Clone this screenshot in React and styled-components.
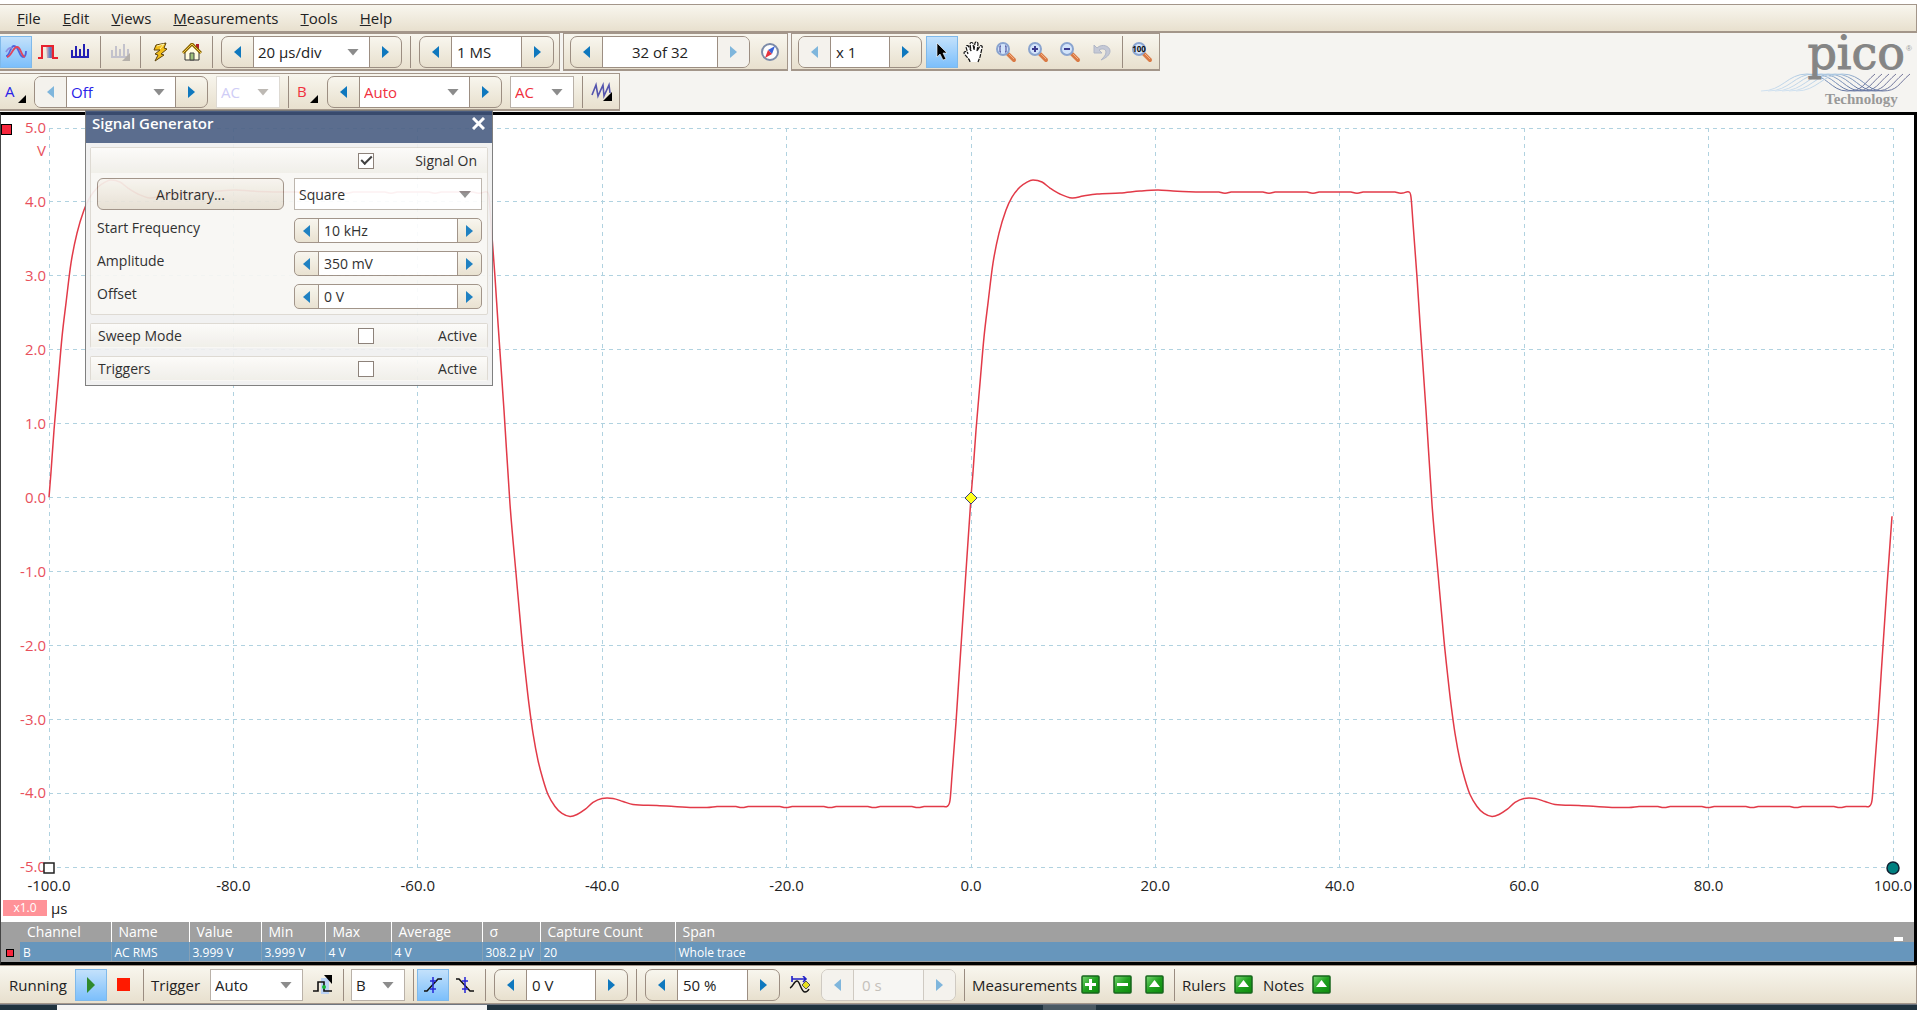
import React from "react";
import styled, { createGlobalStyle, css } from "styled-components";

const GlobalStyle = createGlobalStyle`
  * {
    box-sizing: border-box;
  }
  body {
    margin: 0;
    background: #fff;
    color: #222;
    font-family: "Open Sans", "Noto Sans", sans-serif;
    font-size: 15px;
  }
  button, input, select {
    font: inherit;
    color: inherit;
    margin: 0;
  }
`;

const barFill = "linear-gradient(#f8f6ee, #e8e0ce)";
const line = "#a3968a";

const Window = styled.div`
  min-height: 100vh;
  padding-top: 4px;
  display: flex;
  flex-direction: column;
  overflow: hidden;
`;

const MenuBar = styled.nav`
  height: 29px;
  display: flex;
  align-items: center;
  gap: 22px;
  padding-left: 17px;
  background: ${barFill};
  border: 1px solid ${line};
  border-left: 0;
  border-bottom-width: 2px;
`;

const MenuItem = styled.button`
  border: 0;
  padding: 0;
  background: none;
  line-height: 20px;
`;

const Header = styled.header`
  display: flex;
  justify-content: space-between;
  background: #f5f4f1;
  padding-bottom: 1px;
`;

const Toolbars = styled.div`
  display: flex;
  flex-direction: column;
  gap: 2px;
`;

const ToolRow = styled.div`
  display: flex;
  gap: 3px;
`;

const Group = styled.div`
  display: flex;
  align-items: center;
  height: 38px;
  padding: 0 1px;
  background: ${barFill};
  border: 1px solid ${line};
  border-bottom-width: 2px;
  ${({ $first }) =>
    $first &&
    css`
      border-left: 0;
      padding-left: 0;
    `}
`;

const Tool = styled.button`
  width: ${({ $w }) => $w || 32}px;
  height: 32px;
  flex: none;
  display: flex;
  align-items: center;
  justify-content: center;
  padding: 0;
  border: 1px solid transparent;
  background: none;
  color: ${({ $color }) => $color || "inherit"};
  ${({ $active }) =>
    $active &&
    css`
      border-color: #7fb9ea;
      background: linear-gradient(#c3e1fb, #7cbffb);
    `}
`;

const Sep = styled.span`
  width: 8px;
  height: 32px;
  flex: none;
  background: linear-gradient(#9a8c80, #9a8c80) center / 1px 100% no-repeat;
`;

const SpinBox = styled.div`
  display: flex;
  flex: none;
  width: ${({ $w }) => ($w ? `${$w}px` : "auto")};
  height: ${({ $small }) => ($small ? 25 : 32)}px;
  margin: ${({ $small }) => ($small ? "0" : "0 4px 0 5px")};
  border: 1px solid #9c8e82;
  border-radius: ${({ $small }) => ($small ? 5 : 7)}px;
  background: ${barFill};
  overflow: hidden;
  ${({ $off }) =>
    $off &&
    css`
      border-color: #cfcac2;
      background: #f4f2ed;
    `}
`;

const SpinButton = styled.button`
  width: ${({ $small }) => ($small ? 23 : 31)}px;
  flex: none;
  display: flex;
  align-items: center;
  justify-content: center;
  padding: 0;
  border: 0;
  background: ${({ disabled }) => (disabled ? "#f4f2ed" : "none")};
  color: ${({ disabled }) => (disabled ? "#7fb6dc" : "#0f78be")};
`;

const SpinInput = styled.input`
  flex: 1;
  min-width: 0;
  border: 1px solid #9c8e82;
  border-width: 0 1px;
  border-radius: 0;
  padding: 0 5px;
  outline: 0;
  background: #fff;
  text-align: ${({ $align }) => $align || "left"};
  &:disabled {
    border-color: #cfcac2;
    background: #f7f6f3;
    color: #c4c0ba;
    padding-left: 8px;
  }
`;

const SelectWrap = styled.div`
  position: relative;
  display: flex;
  ${({ $inside, $w, $off, $fluid }) =>
    $inside
      ? css`
          flex: 1;
          border: 1px solid #9c8e82;
          border-width: 0 1px;
        `
      : css`
          flex: none;
          width: ${$fluid ? "auto" : `${$w}px`};
          height: 32px;
          margin: ${$fluid ? "0" : "0 4px"};
          border: 1px solid ${$off ? "#dedad3" : "#b9b1a8"};
        `}
`;

const NativeSelect = styled.select`
  appearance: none;
  width: 100%;
  border: 0;
  border-radius: 0;
  outline: 0;
  padding: 0 24px 0 4px;
  background: #fff;
  color: ${({ $color }) => $color || "inherit"};
  opacity: 1;
`;

const DropArrow = styled.span`
  position: absolute;
  right: 10px;
  top: 50%;
  margin-top: -3px;
  width: 12px;
  height: 7px;
  clip-path: polygon(0 0, 100% 0, 50% 100%);
  background: ${({ $off }) => ($off ? "#bdb9b4" : "#8c8c8c")};
  pointer-events: none;
`;

const Scope = styled.main`
  position: relative;
  flex: 1;
  display: flex;
  flex-direction: column;
  border: 3px solid #000;
  border-left: 1px solid #444;
`;

const Graph = styled.section`
  flex: 1;
  min-height: 400px;
  display: grid;
  grid-template-columns: 48px 1fr 21px;
  grid-template-rows: 1fr 28px 26px;
  padding-top: 13px;
  background: #fff;
`;

const YAxis = styled.div`
  position: relative;
  display: flex;
  flex-direction: column;
  justify-content: space-between;
  align-items: flex-end;
  padding-right: 3px;
  margin: -11px 0 -9px;
  line-height: 20px;
  color: #e8505c;
`;

const YUnit = styled.span`
  position: absolute;
  right: 3px;
  top: 23px;
`;

const ChannelMark = styled.span`
  position: absolute;
  left: 0;
  top: 7px;
  width: 11px;
  height: 11px;
  background: #f7263c;
  border: 1px solid #000;
`;

const Plot = styled.div`
  position: relative;
`;

const PlotSvg = styled.svg`
  position: absolute;
  inset: 0;
  width: 100%;
  height: 100%;
  overflow: visible;
`;

const Marker = styled.span`
  position: absolute;
  left: ${({ $x }) => $x}%;
  top: ${({ $y }) => $y}%;
  transform: translate(-50%, -50%);
  display: flex;
`;

const XAxis = styled.div`
  grid-column: 2;
  display: flex;
  justify-content: space-between;
  padding-top: 7px;
  line-height: 20px;
`;

const XLabel = styled.span`
  width: 0;
  display: flex;
  justify-content: center;
  white-space: nowrap;
`;

const ScaleRow = styled.div`
  grid-column: 1 / -1;
  display: flex;
  align-items: center;
  gap: 4px;
  padding: 0 0 2px 2px;
`;

const ScaleBadge = styled.button`
  width: 44px;
  height: 16px;
  padding: 0;
  border: 0;
  background: #ff9298;
  color: #fff;
  font-size: 12px;
  line-height: 16px;
`;

const Table = styled.table`
  width: 100%;
  table-layout: fixed;
  border-collapse: collapse;
  color: #fff;
  text-align: left;
  white-space: nowrap;
  background: #a0a0a0;

  th, td {
    height: 20px;
    padding: 0;
    overflow: hidden;
  }
  th {
    font-size: 14px;
    font-weight: 400;
    line-height: 20px;
    padding-left: 7px;
    border-left: 1px solid #fff;
  }
  th:nth-child(-n + 2) {
    border-left: 0;
  }
  td {
    background: #6796bc;
    font-size: 12px;
    line-height: 16px;
    padding: 3px 0 0 3px;
    border-left: 1px solid #86a0b5;
    border-bottom: 1px solid #a0a0a0;
  }
  td:first-child {
    background: #a0a0a0;
    padding-left: 5px;
    border-left: 0;
  }
  td:nth-child(2) {
    border-left: 0;
  }
`;

const Col = styled.col`
  width: ${({ $w }) => ($w ? `${$w}px` : "auto")};
`;

const RowMark = styled.span`
  display: block;
  width: 8px;
  height: 8px;
  background: #f7263c;
  border: 1px solid #000;
`;

const LastHead = styled.div`
  display: flex;
  justify-content: space-between;
  align-items: flex-end;
  height: 20px;
`;

const Collapse = styled.button`
  width: 9px;
  height: 4px;
  padding: 0;
  border: 0;
  background: #fff;
  margin: 0 11px 1px 0;
`;

const Dialog = styled.section`
  position: absolute;
  left: 84px;
  top: -5px;
  width: 408px;
  background: #f0f0f0;
  border: 1px solid #777;
  opacity: 0.93;
  display: flex;
  flex-direction: column;
  gap: 8px;
  padding-bottom: 4px;
  font-size: 14px;
`;

const TitleBar = styled.header`
  height: 32px;
  display: flex;
  justify-content: space-between;
  align-items: flex-start;
  padding: 0 7px 0 6px;
  background: linear-gradient(#3d5076 4px, #4f6386 4px);
  color: #fff;
  margin-bottom: -4px;
`;

const Title = styled.h2`
  margin: 2px 0 0;
  font-size: 15px;
  line-height: 20px;
  font-weight: 600;
`;

const CloseButton = styled.button`
  display: flex;
  padding: 6px 0 0;
  border: 0;
  background: none;
`;

const Panel = styled.div`
  margin: 0 4px;
  border: 1px solid #dcd8d0;
  border-bottom-color: ${({ $open }) => ($open ? "#dcd8d0" : "transparent")};
  border-radius: 2px;
  background: #f8f7f4;
`;

const PanelHead = styled.div`
  display: flex;
  align-items: center;
  height: ${({ $tall }) => ($tall ? 25 : 23)}px;
  padding: 0 10px 0 7px;
  background: linear-gradient(#fcfbf9, #f0eee8);
`;

const PanelName = styled.span`
  width: 260px;
`;

const CheckLabel = styled.label`
  flex: 1;
  display: flex;
  justify-content: space-between;
  align-items: center;
`;

const CheckBox = styled.input`
  appearance: none;
  width: 16px;
  height: 16px;
  border: 1px solid #857970;
  background: #fff;
  display: flex;
  align-items: center;
  justify-content: center;
  &:checked::before {
    content: "";
    width: 9px;
    height: 4px;
    margin-bottom: 3px;
    border: solid #333;
    border-width: 0 0 2px 2px;
    rotate: -45deg;
  }
`;

const Form = styled.div`
  display: grid;
  grid-template-columns: 187px 188px;
  column-gap: 10px;
  row-gap: 8px;
  padding: 5px 5px 5px 6px;
`;

const WideButton = styled.button`
  height: 32px;
  border: 1px solid #9c8e82;
  border-radius: 6px;
  background: linear-gradient(#f7f4ee, #e6dfd2);
`;

const FieldLabel = styled.label`
  line-height: 20px;
`;

const StatusBar = styled.footer`
  display: flex;
  align-items: center;
  height: 39px;
  background: ${barFill};
  border: solid ${line};
  border-width: 1px 1px 1px 0;
`;

const BarLabel = styled.span`
  width: ${({ $w }) => $w}px;
  padding-left: ${({ $pad }) => $pad || 4}px;
  flex: none;
  white-space: nowrap;
`;

const TaskStrip = styled.div`
  display: flex;
  height: 6px;
  background: #20333f;
  border-top: 1px solid #6f7680;
  padding-left: 57px;
  gap: 556px;
`;

const TaskPart = styled.span`
  width: ${({ $w }) => $w}px;
  background: ${({ $color }) => $color};
`;

const LogoSvg = styled.svg`
  flex: none;
  overflow: visible;
`;

/* ---------- small building blocks ---------- */

const Tri = ({ dir }) => (
  <svg width="7" height="12" viewBox="0 0 7 12">
    <path d={dir === "left" ? "M7 0v12L0 6z" : "M0 0v12l7-6z"} fill="currentColor" />
  </svg>
);

const Select = ({ label, options, color, off, ...rest }) => (
  <SelectWrap $off={off} {...rest}>
    <NativeSelect aria-label={label} disabled={off} $color={color}>
      {options.map((o) => (
        <option key={o}>{o}</option>
      ))}
    </NativeSelect>
    <DropArrow $off={off} />
  </SelectWrap>
);

const Spinner = ({ id, label, value, options, color, w, align, small, noPrev, noNext, off }) => (
  <SpinBox $w={w} $small={small} $off={off}>
    <SpinButton aria-label={`${label} down`} disabled={noPrev || off} $small={small}>
      <Tri dir="left" />
    </SpinButton>
    {options ? (
      <Select $inside label={label} options={options} color={color} />
    ) : (
      <SpinInput id={id} aria-label={label} defaultValue={value} disabled={off} $align={align} />
    )}
    <SpinButton aria-label={`${label} up`} disabled={noNext || off} $small={small}>
      <Tri dir="right" />
    </SpinButton>
  </SpinBox>
);

/* ---------- icons ---------- */

const ScopeIcon = () => (
  <svg width="22" height="16" viewBox="0 0 22 16" fill="none" strokeWidth="1.8">
    <path d="M1 12C5 12 5 2 9 2c5 0 5 11 9 11 2 0 3-3 3-6" stroke="#4f66dc" />
    <path d="M2 13C6 13 8 3 12 3s4 9 8 10" stroke="#e0455c" />
    <path d="M1 8c1-2 3-5 6-4" stroke="#8d8fe0" />
  </svg>
);

const PersistIcon = () => (
  <svg width="20" height="16" viewBox="0 0 20 16">
    <defs>
      <linearGradient id="persist">
        <stop offset="0" stopColor="#f4b9b4" />
        <stop offset=".6" stopColor="#4c7fc8" />
        <stop offset="1" stopColor="#d94b56" />
      </linearGradient>
    </defs>
    <path d="M8 2h7v12H9z" fill="url(#persist)" />
    <path d="M0 14h4V2h11v12h5" fill="none" stroke="#e8222e" strokeWidth="2" />
  </svg>
);

const Bars = ({ color, corner }) => (
  <svg width="20" height="18" viewBox="0 0 20 18">
    <path d="M1 14h18M2 14V7M6 14V3M10 14V6M14 14V1M18 14V6" stroke={color} strokeWidth="2" fill="none" />
    {corner && <path d="M20 10v8h-8z" fill="#b5b0aa" />}
  </svg>
);

const BoltIcon = () => (
  <svg width="18" height="20" viewBox="0 0 18 20">
    <path d="M5 3l10-2-2 5 3 1-6 5 3 1-9 6 3-6-3-1 5-4-6 0z" fill="#f2bd1a" stroke="#5c430e" strokeLinejoin="round" />
    <path d="M6 4l7-2-4 5" fill="none" stroke="#fff3a8" />
  </svg>
);

const HomeIcon = () => (
  <svg width="20" height="18" viewBox="0 0 20 18">
    <path d="M14 1h3v7h-3z" fill="#b3202a" />
    <path d="M3 9v8h14V9l-7-7z" fill="#fffbe0" stroke="#333" />
    <path d="M1 10L10 1l9 9" fill="none" stroke="#8a6400" strokeWidth="3" />
    <path d="M1 10L10 1l9 9" fill="none" stroke="#edc84a" />
    <path d="M8 10h4v7H8z" fill="#9fc07c" stroke="#444" />
  </svg>
);

const CompassIcon = () => (
  <svg width="20" height="20" viewBox="0 0 20 20">
    <circle cx="10" cy="10" r="8" fill="#fdfdfd" stroke="#7c8ba8" strokeWidth="2" />
    <path d="M15 4l-3 8-4-4z" fill="#3b62d6" />
    <path d="M5 16l3-8 4 4z" fill="#e8323c" />
  </svg>
);

const CursorIcon = () => (
  <svg width="14" height="21" viewBox="0 0 14 21">
    <path d="M2 2v14l3-3 3 6 3-1-3-6h4z" fill="#000" stroke="#fff" strokeOpacity=".6" />
  </svg>
);

const HandIcon = () => (
  <svg width="22" height="22" viewBox="0 0 22 22">
    <path
      d="M7 21c0-3-4-5-6-9 0-2 3-2 4 1L3 6c0-2 2-2 3 0l2 4L7 3c0-2 3-2 3 0l1 6 1-7c1-2 3-1 3 1l-1 7 3-5c1-1 3 0 2 2l-2 9-2 5"
      fill="#fff"
      stroke="#111"
      strokeWidth="1.2"
      strokeDasharray="4 1"
    />
  </svg>
);

const Magnifier = ({ children }) => (
  <svg width="22" height="22" viewBox="0 0 22 22">
    <path d="M13 13l6 6" stroke="#d97a45" strokeWidth="4" strokeLinecap="round" />
    <path d="M14 13l5 5" stroke="#f4b184" strokeWidth="1" />
    <circle cx="8" cy="8" r="6" fill="#d3e4fa" stroke="#8aa4cf" strokeWidth="2" />
    {children}
  </svg>
);

const UndoIcon = () => (
  <svg width="20" height="20" viewBox="0 0 20 20">
    <path d="M2 3v8h8L7 8c3-2 7-1 7 2 0 3-2 5-5 8 5-2 9-5 9-9 0-5-8-8-13-3z" fill="#c5c9d6" stroke="#b0b6c6" />
  </svg>
);

const WavesIcon = () => (
  <svg width="22" height="20" viewBox="0 0 22 20">
    <path d="M1 13L5 3l2 11 5-11 1 11 5-11 1 8" fill="none" stroke="#5454ae" strokeWidth="1.6" />
    <path d="M21 10v9h-9z" fill="#000" />
  </svg>
);

const ChannelIcon = ({ name }) => (
  <svg width="24" height="22" viewBox="0 0 24 22">
    <text x="2" y="16" fontSize="15" fill="currentColor">
      {name}
    </text>
    <path d="M23 14v8h-8z" fill="#000" />
  </svg>
);

const PlayIcon = () => (
  <svg width="10" height="16" viewBox="0 0 10 16">
    <path d="M1 0v16l8-8z" fill="#2f8a2b" />
  </svg>
);

const StopIcon = () => (
  <svg width="13" height="13">
    <rect width="13" height="13" fill="#ff1a00" />
  </svg>
);

const AdvancedTriggerIcon = () => (
  <svg width="22" height="20" viewBox="0 0 22 20">
    <path d="M9 3h8v16H9z" fill="#bcd3f5" />
    <path d="M1 16h5V7h6v9h8" fill="none" stroke="#111" strokeWidth="1.6" />
    <path d="M12 0h8v9z" fill="#000" />
    <circle cx="12" cy="12" r="2" fill="#18b83a" />
  </svg>
);

const EdgeIcon = ({ falling }) => (
  <svg width="20" height="18" viewBox="0 0 20 18">
    <path
      d={falling ? "M1 3h3l11 12h4" : "M1 15h3L15 3h4"}
      fill="none"
      stroke="#111"
      strokeWidth="1.5"
    />
    <path d="M10 1v16M7 5h6M7 13h6" stroke="#2626d8" strokeWidth="1.5" fill="none" />
  </svg>
);

const TriggerTimeIcon = () => (
  <svg width="22" height="18" viewBox="0 0 22 18">
    <path d="M1 12c3-1 4-7 7-7s4 11 8 11c2 0 3-1 4-3" fill="none" stroke="#111" strokeWidth="1.5" />
    <path d="M3 0v6M3 3h14M14 0l3 3-3 3" fill="none" stroke="#2020c8" strokeWidth="1.6" />
    <path d="M17 5l4 4-4 4-4-4z" fill="#e8e020" stroke="#555" />
  </svg>
);

const GreenIcon = ({ d, fill }) => (
  <svg width="19" height="19" viewBox="0 0 19 19">
    <defs>
      <linearGradient id="green" x2="1" y2="1">
        <stop offset="0" stopColor="#7ad873" />
        <stop offset=".5" stopColor="#1fa01f" />
        <stop offset="1" stopColor="#0c8a0c" />
      </linearGradient>
    </defs>
    <rect x="1" y="1" width="17" height="17" rx="1" fill="url(#green)" stroke="#17661d" strokeWidth="1.5" />
    <path d={d} fill={fill ? "#fff" : "none"} stroke={fill ? "none" : "#fff"} strokeWidth="3" />
  </svg>
);

const PLUS = "M9.500 4v11M4 9.500h11";
const MINUS = "M4 9.500h11";
const UP = "M9.500 5l5.500 7H4z";

const Logo = () => (
  <LogoSvg width="160" height="78" viewBox="0 0 160 78" role="img" aria-label="pico Technology">
    <defs>
      <linearGradient id="ribbon" gradientUnits="userSpaceOnUse" x1="4" x2="120" y1="0" y2="0">
        <stop offset="0" stopColor="#d3e3f1" />
        <stop offset=".4" stopColor="#a9c6e0" />
        <stop offset=".65" stopColor="#6479a6" />
        <stop offset="1" stopColor="#77779a" />
      </linearGradient>
    </defs>
    {[0, 1, 2, 3, 4, 5].map((i) => (
      <path
        key={i}
        transform={`translate(${i * 7} 0)`}
        d="M4 58C26 58 30 41 50 41S74 58 90 58S106 51 118 41"
        fill="none"
        stroke="url(#ribbon)"
      />
    ))}
    <text x="148" y="36" textAnchor="end" fontFamily="DejaVu Serif, serif" fontSize="46" fill="#858585" stroke="#858585">
      pico
    </text>
    <text x="149" y="18" fontFamily="Liberation Sans, sans-serif" fontSize="8" fill="#999">
      ®
    </text>
    <text x="68" y="71" fontFamily="Liberation Serif, serif" fontSize="15" fontWeight="700" fill="#999">
      Technology
    </text>
  </LogoSvg>
);

/* ---------- trace ---------- */

const W = 1844;
const H = 739;
const HALF = W / 4;

// [dx from the zero crossing, y]
const RISE = [
  [-24, 678], [-21, 672], [-19, 647], [-15, 594], [-12, 548], [-6, 458], [0, 369],
  [2, 344], [5, 302], [9, 255], [13, 209], [17, 175], [22, 135], [28, 105], [35, 82],
  [41, 69], [49, 59], [56, 54], [62, 52], [71, 54], [79, 60], [89, 66], [101, 70],
  [112, 68], [126, 66], [149, 65], [169, 63], [187, 62], [202, 63], [229, 64],
];
const FALL = [
  [-23, 64], [-21, 69], [-19, 95], [-15, 149], [-12, 195], [-6, 282], [0, 376],
  [6, 445], [12, 512], [16, 550], [19, 576], [23, 605], [28, 632], [33, 651], [38, 666],
  [45, 678], [52, 685], [60, 688], [67, 686], [75, 681], [83, 674], [92, 670], [103, 670],
  [113, 673], [123, 676], [147, 677], [180, 679], [197, 679], [207, 678],
];

const edge = (pts, at) => pts.map(([dx, y]) => [at + dx, y]);
const flat = (from, to, y) => {
  const out = [];
  for (let x = from, i = 0; x < to; x += 4, i++) {
    out.push([x, y + ((i * i) % 11 === 3 ? 1 : 0)]);
  }
  return out;
};

const trace = [
  ...edge(RISE, 0).filter(([x]) => x >= 0),
  ...flat(232, HALF - 26, 64),
  ...edge(FALL, HALF),
  ...flat(HALF + 210, HALF * 2 - 26, 678),
  ...edge(RISE, HALF * 2),
  ...flat(HALF * 2 + 232, HALF * 3 - 26, 64),
  ...edge(FALL, HALF * 3),
  ...flat(HALF * 3 + 210, W - 26, 678),
  ...edge(RISE, W).filter(([x]) => x < W - 5),
  [W - 1, 388],
];

// smooth curve through the samples
const smooth = (pts) => {
  let d = `M${pts[0]}`;
  for (let i = 0; i < pts.length - 1; i++) {
    const a = pts[i - 1] || pts[i];
    const b = pts[i];
    const c = pts[i + 1];
    const e = pts[i + 2] || c;
    const k = (c[0] - b[0]) / 3;
    const s1 = c[0] === a[0] ? 0 : (c[1] - a[1]) / (c[0] - a[0]);
    const s2 = e[0] === b[0] ? 0 : (e[1] - b[1]) / (e[0] - b[0]);
    d += `C${b[0] + k},${b[1] + s1 * k} ${c[0] - k},${c[1] - s2 * k} ${c}`;
  }
  return d;
};

const tracePath = smooth(trace);
const steps = Array.from({ length: 11 }, (_, i) => i);

const PlotArea = () => (
  <Plot>
    <PlotSvg viewBox={`0 0 ${W} ${H}`} preserveAspectRatio="none">
      <g stroke="#b0d2e0" strokeDasharray="4 4">
        {steps.map((i) => (
          <path key={`h${i}`} d={`M0 ${(H / 10) * i}H${W}`} vectorEffect="non-scaling-stroke" shapeRendering="crispEdges" />
        ))}
        {steps.map((i) => (
          <path key={`v${i}`} d={`M${(W / 10) * i} 0V${H}`} vectorEffect="non-scaling-stroke" shapeRendering="crispEdges" />
        ))}
      </g>
      <path d={tracePath} fill="none" stroke="#e23a48" strokeWidth="1.500" vectorEffect="non-scaling-stroke" />
    </PlotSvg>
    <Marker $x={50} $y={50}>
      <svg width="14" height="14" viewBox="0 0 14 14">
        <path d="M7 1l6 6-6 6-6-6z" fill="#ffff1a" stroke="#3c3c78" />
      </svg>
    </Marker>
    <Marker $x={0} $y={100}>
      <svg width="12" height="12">
        <rect x="1" y="1" width="10" height="10" fill="#fff" stroke="#222" strokeWidth="1.500" />
      </svg>
    </Marker>
    <Marker $x={100} $y={100}>
      <svg width="14" height="14">
        <circle cx="7" cy="7" r="6" fill="#008080" stroke="#123" strokeWidth="1.500" />
      </svg>
    </Marker>
  </Plot>
);

const SignalGenerator = () => (
  <Dialog>
    <TitleBar>
      <Title>Signal Generator</Title>
      <CloseButton aria-label="Close">
        <svg width="13" height="13" viewBox="0 0 13 13">
          <path d="M1 1l11 11M12 1L1 12" stroke="#fff" strokeWidth="3" />
        </svg>
      </CloseButton>
    </TitleBar>
    <Panel $open>
      <PanelHead $tall>
        <PanelName />
        <CheckLabel>
          <CheckBox type="checkbox" defaultChecked /> Signal On
        </CheckLabel>
      </PanelHead>
      <Form>
        <WideButton>Arbitrary...</WideButton>
        <Select $fluid label="Wave type" options={["Square", "Sine", "Triangle"]} />
        <FieldLabel htmlFor="freq">Start Frequency</FieldLabel>
        <Spinner small id="freq" label="Start Frequency" value="10 kHz" />
        <FieldLabel htmlFor="amp">Amplitude</FieldLabel>
        <Spinner small id="amp" label="Amplitude" value="350 mV" />
        <FieldLabel htmlFor="offset">Offset</FieldLabel>
        <Spinner small id="offset" label="Offset" value="0 V" />
      </Form>
    </Panel>
    {["Sweep Mode", "Triggers"].map((name) => (
      <Panel key={name}>
        <PanelHead>
          <PanelName>{name}</PanelName>
          <CheckLabel>
            <CheckBox type="checkbox" /> Active
          </CheckLabel>
        </PanelHead>
      </Panel>
    ))}
  </Dialog>
);

const measurements = [
  ["Channel", "B", 91],
  ["Name", "AC RMS", 78],
  ["Value", "3.999 V", 72],
  ["Min", "3.999 V", 64],
  ["Max", "4 V", 66],
  ["Average", "4 V", 91],
  ["σ", "308.2 µV", 58],
  ["Capture Count", "20", 135],
];

const MeasurementTable = () => (
  <Table>
    <colgroup>
      <Col $w={19} />
      {measurements.map(([name, , w]) => (
        <Col key={name} $w={w} />
      ))}
      <Col />
    </colgroup>
    <thead>
      <tr>
        <th />
        {measurements.map(([name]) => (
          <th key={name}>{name}</th>
        ))}
        <th>
          <LastHead>
            Span
            <Collapse aria-label="Collapse" />
          </LastHead>
        </th>
      </tr>
    </thead>
    <tbody>
      <tr>
        <td>
          <RowMark />
        </td>
        {measurements.map(([name, value]) => (
          <td key={name}>{value}</td>
        ))}
        <td>Whole trace</td>
      </tr>
    </tbody>
  </Table>
);

const App = () => {
  return (
    <Window>
      <GlobalStyle />
      <MenuBar>
        {["File", "Edit", "Views", "Measurements", "Tools", "Help"].map((m) => (
          <MenuItem key={m}>
            <u>{m[0]}</u>
            {m.slice(1)}
          </MenuItem>
        ))}
      </MenuBar>

      <Header>
        <Toolbars>
          <ToolRow>
            <Group $first>
              <Tool $active aria-label="Scope mode"><ScopeIcon /></Tool>
              <Tool aria-label="Persistence mode"><PersistIcon /></Tool>
              <Tool aria-label="Spectrum mode"><Bars color="#2320b4" /></Tool>
              <Sep />
              <Tool aria-label="Spectrum options"><Bars color="#c3c2cc" corner /></Tool>
              <Sep />
              <Tool aria-label="Auto setup"><BoltIcon /></Tool>
              <Tool aria-label="Home"><HomeIcon /></Tool>
              <Sep />
              <Spinner w={181} label="Timebase" options={["20 µs/div", "50 µs/div"]} />
              <Sep />
              <Spinner w={135} label="Samples" value="1 MS" />
            </Group>
            <Group>
              <Spinner w={180} label="Buffer" value="32 of 32" align="center" noNext />
              <Tool aria-label="Buffer navigator"><CompassIcon /></Tool>
            </Group>
            <Group>
              <Spinner w={124} label="Zoom" value="x 1" noPrev />
              <Tool $active aria-label="Select"><CursorIcon /></Tool>
              <Tool aria-label="Hand"><HandIcon /></Tool>
              <Tool aria-label="Marquee zoom">
                <Magnifier>
                  <path d="M6 5H5v6h1M10 5h1v6h-1" fill="none" stroke="#3c3c90" />
                </Magnifier>
              </Tool>
              <Tool aria-label="Zoom in">
                <Magnifier>
                  <path d="M8 5v6M5 8h6" stroke="#3c3c90" strokeWidth="2" />
                </Magnifier>
              </Tool>
              <Tool aria-label="Zoom out">
                <Magnifier>
                  <path d="M5 8h6" stroke="#3c3c90" strokeWidth="2" />
                </Magnifier>
              </Tool>
              <Tool aria-label="Undo zoom"><UndoIcon /></Tool>
              <Sep />
              <Tool aria-label="Zoom to full view">
                <Magnifier>
                  <text x="8" y="11" textAnchor="middle" fontSize="8" fontWeight="700" fill="#111">
                    100
                  </text>
                </Magnifier>
              </Tool>
            </Group>
          </ToolRow>
          <ToolRow>
            <Group $first>
              <Tool $w={29} $color="#2a22e8" aria-label="Channel A options"><ChannelIcon name="A" /></Tool>
              <Spinner w={174} label="Channel A range" options={["Off", "Auto"]} color="#2a22e8" noPrev />
              <Select $w={64} label="Channel A coupling" options={["AC", "DC"]} color="#cfcdf6" off />
              <Sep />
              <Tool $w={30} $color="#f0303e" aria-label="Channel B options"><ChannelIcon name="B" /></Tool>
              <Spinner w={175} label="Channel B range" options={["Auto", "Off"]} color="#f0303e" />
              <Select $w={64} label="Channel B coupling" options={["AC", "DC"]} color="#f0303e" />
              <Sep />
              <Tool aria-label="Signal generator"><WavesIcon /></Tool>
            </Group>
          </ToolRow>
        </Toolbars>
        <Logo />
      </Header>

      <Scope>
        <Graph>
          <YAxis>
            {steps.map((i) => (
              <span key={i}>{(5 - i).toFixed(1)}</span>
            ))}
            <YUnit>V</YUnit>
            <ChannelMark />
          </YAxis>
          <PlotArea />
          <XAxis>
            {steps.map((i) => (
              <XLabel key={i}>{(i * 20 - 100).toFixed(1)}</XLabel>
            ))}
          </XAxis>
          <ScaleRow>
            <ScaleBadge>x1.0</ScaleBadge>
            µs
          </ScaleRow>
        </Graph>
        <MeasurementTable />
        <SignalGenerator />
      </Scope>

      <StatusBar>
        <BarLabel $w={75} $pad={9}>Running</BarLabel>
        <Tool $active aria-label="Start"><PlayIcon /></Tool>
        <Tool aria-label="Stop"><StopIcon /></Tool>
        <Sep />
        <BarLabel $w={59}>Trigger</BarLabel>
        <Select $w={93} label="Trigger mode" options={["Auto", "None", "Single"]} />
        <Tool aria-label="Advanced triggers"><AdvancedTriggerIcon /></Tool>
        <Sep />
        <Select $w={54} label="Trigger channel" options={["B", "A"]} />
        <Sep />
        <Tool $active aria-label="Rising edge"><EdgeIcon /></Tool>
        <Tool aria-label="Falling edge"><EdgeIcon falling /></Tool>
        <Sep />
        <Spinner w={134} label="Threshold" value="0 V" />
        <Sep />
        <Spinner w={135} label="Pre-trigger" value="50 %" />
        <Tool aria-label="Trigger delay"><TriggerTimeIcon /></Tool>
        <Spinner w={135} label="Delay" value="0 s" off />
        <Sep />
        <BarLabel $w={106}>Measurements</BarLabel>
        <Tool aria-label="Add measurement"><GreenIcon d={PLUS} /></Tool>
        <Tool aria-label="Remove measurement"><GreenIcon d={MINUS} /></Tool>
        <Tool aria-label="Edit measurement"><GreenIcon d={UP} fill /></Tool>
        <Sep />
        <BarLabel $w={49}>Rulers</BarLabel>
        <Tool aria-label="Rulers"><GreenIcon d={UP} fill /></Tool>
        <BarLabel $w={46}>Notes</BarLabel>
        <Tool aria-label="Notes"><GreenIcon d={UP} fill /></Tool>
      </StatusBar>
      <TaskStrip>
        <TaskPart $w={430} $color="#f4f4f4" />
        <TaskPart $w={53} $color="#4b5a64" />
      </TaskStrip>
    </Window>
  );
};

export default App;
